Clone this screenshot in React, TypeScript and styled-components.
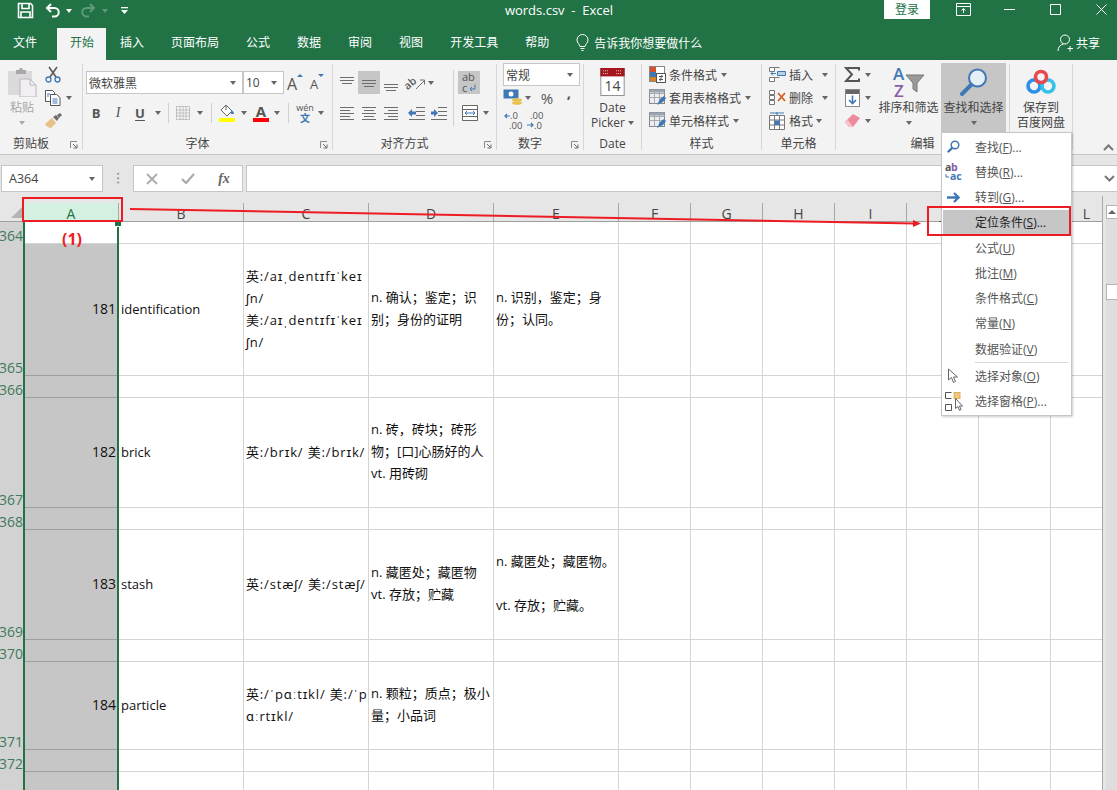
import { ReactNode } from "react"
import styled, { createGlobalStyle } from "styled-components"

const FONT = `"Open Sans", "Noto Sans CJK SC", sans-serif`
const GREEN = "#217346"
const RED = "#ed1c24"
const GRID_COLS = "24px 95px 125px 125px 125px 125px repeat(7, 72px)"

const GlobalStyle = createGlobalStyle`
  html, body {
    margin: 0;
    padding: 0;
    background: #e6e6e6;
  }
  body {
    font-family: ${FONT};
    font-size: 12px;
    color: #444;
  }
`

/* ---------- icons ---------- */

const G = "#6d6d6d"
const B = "#3f78b4"

function Save() {
  return (
    <svg width="17" height="17" viewBox="0 0 17 17" fill="none" stroke="#fff">
      <path d="M1.5 1.5h12l2 2v12h-14z" strokeWidth="1.6" />
      <path d="M5 2v4.5h7V2M4 15.5V10h9v5.500" strokeWidth="1.6" />
    </svg>
  )
}

function Undo() {
  return (
    <svg width="16" height="15" viewBox="0 0 16 15" fill="none" stroke="#fff" strokeWidth="2">
      <path d="M6 1 2 5l4 4" />
      <path d="M2 5h7.500a4 4 0 0 1 0 8.500H7" />
    </svg>
  )
}

function Redo() {
  return (
    <svg width="16" height="15" viewBox="0 0 16 15" fill="none" stroke="#5f9a7d" strokeWidth="2">
      <path d="m10 1 4 4-4 4" />
      <path d="M14 5H6.500a4 4 0 0 0 0 8.500H9" />
    </svg>
  )
}

function Customize() {
  return (
    <svg width="9" height="9" viewBox="0 0 9 9" fill="#fff">
      <rect x="1" y="1" width="7" height="1.300" />
      <path d="M1 4h7L4.500 8z" />
    </svg>
  )
}

function DisplayOptions() {
  return (
    <svg width="15" height="13" viewBox="0 0 15 13" fill="none" stroke="#fff">
      <path d="M.5.500h14v12H.500zM.5 3.500h14" />
      <path d="M7.500 10V5.500M5.500 7.500l2-2 2 2" />
    </svg>
  )
}

function WinMin() {
  return (
    <svg width="11" height="11" viewBox="0 0 11 11" stroke="#fff">
      <path d="M0 5.500h11" />
    </svg>
  )
}

function WinMax() {
  return (
    <svg width="11" height="11" viewBox="0 0 11 11" fill="none" stroke="#fff">
      <path d="M.5.500h10v10H.500z" />
    </svg>
  )
}

function WinClose() {
  return (
    <svg width="11" height="11" viewBox="0 0 11 11" stroke="#fff">
      <path d="m.500.500 10 10M10.500.500l-10 10" />
    </svg>
  )
}

function Bulb() {
  return (
    <svg width="13" height="18" viewBox="0 0 13 18" fill="none" stroke="#fff">
      <path d="M4 12.500C3.500 10 1 9 1 6a5.500 5.500 0 0 1 11 0c0 3-2.500 4-3 6.500z" />
      <path d="M4.500 14.500h4M5.500 16.500h2" />
    </svg>
  )
}

function Person() {
  return (
    <svg width="18" height="18" viewBox="0 0 18 18" fill="none" stroke="#fff">
      <circle cx="8" cy="5.500" r="4.500" />
      <path d="M1 17c0-4 2.500-6.500 5.500-7M13 12v5.500M10.500 14.500h5.500" />
    </svg>
  )
}

function Paste() {
  return (
    <svg width="30" height="30" viewBox="0 0 30 30">
      <path d="M1 4h24v24H1z" fill="#dcd9dc" />
      <path d="M9 3h3a2 2 0 0 1 4 0h3v4H9z" fill="#a9a7a9" />
      <path d="M13 12h10l6 6v12H13z" fill="#f1eff4" stroke="#b9b6bd" />
      <path d="M23 12v6h6" fill="none" stroke="#b9b6bd" />
    </svg>
  )
}

function Scissors() {
  return (
    <svg width="16" height="17" viewBox="0 0 16 17" fill="none">
      <path d="M4 1l7 10M12 1 5 11" stroke="#5b5b5b" strokeWidth="1.600" />
      <circle cx="3.500" cy="13.500" r="2.500" stroke={B} strokeWidth="1.300" />
      <circle cx="12.500" cy="13.500" r="2.500" stroke={B} strokeWidth="1.300" />
    </svg>
  )
}

function Copy() {
  return (
    <svg width="16" height="16" viewBox="0 0 16 16" fill="#fff" stroke="#555">
      <path d="M.5.500h7l2 2v9h-9z" />
      <path d="M5.500 4.500h6l3.500 3v8H5.500z" />
      <path d="M7.500 9h5M7.500 11h5M7.500 13h5M2 4h3M2 6h2" stroke={B} />
    </svg>
  )
}

function Painter() {
  return (
    <svg width="18" height="16" viewBox="0 0 18 16">
      <path d="M1 11 8 5l4 5-5 5c-2 0-5-2-6-4z" fill="#e9c087" />
      <path d="m9 4 3-2 3 3-2 3z" fill="#6d6d6d" />
      <path d="m13 2 3-2 2 2-3 3z" fill="#6d6d6d" />
    </svg>
  )
}

function Launcher() {
  return (
    <svg width="8" height="8" viewBox="0 0 8 8" fill="none" stroke="#8a8a8a">
      <path d="M.5 7V.500H7" />
      <path d="M3 3l3.500 3.500M7 3.500V7H3.500" stroke="#6a6a6a" />
    </svg>
  )
}

function Borders() {
  return (
    <svg width="14" height="14" viewBox="0 0 14 14" fill="none" stroke="#9a9a9a" strokeDasharray="1 1">
      <path d="M.5.500h13v13H.500zM.5 7h13M7 .500v13M.5 4h13M.5 10h13M4 .500v13M10 .500v13" />
    </svg>
  )
}

function FillColor() {
  return (
    <svg width="18" height="18" viewBox="0 0 18 18">
      <path d="m8 1 6 6-5 5-6-6z" fill="#fff" stroke="#666" />
      <path d="M8 1V6" stroke="#666" />
      <path d="M13 6c2 1 3 2 3 4h-3z" fill={B} />
      <rect x="1" y="14" width="16" height="4" fill="#ffff00" />
    </svg>
  )
}

function FontColor() {
  return (
    <svg width="18" height="18" viewBox="0 0 18 18" overflow="visible">
      <text x="9" y="12.500" textAnchor="middle" fontSize="15" fontWeight="700" fontFamily="Open Sans" fill="#555">A</text>
      <rect x="1" y="14" width="16" height="4" fill="#ff0000" />
    </svg>
  )
}

function AlignLines({ rows, color = G }: { rows: [number, number, number][]; color?: string }) {
  return (
    <svg width="16" height="16" viewBox="0 0 16 16" stroke={color}>
      {rows.map(([x1, x2, y]) => (
        <path key={`${x1}-${x2}-${y}`} d={`M${x1} ${y}.5H${x2}`} />
      ))}
    </svg>
  )
}

function Orientation() {
  return (
    <svg width="19" height="17" viewBox="0 0 19 17" overflow="visible">
      <text x="0" y="15" transform="rotate(-40 2 15)" fontSize="10.500" fontFamily="Open Sans" fontWeight="600" fill="#555">ab</text>
      <path d="M9 15 17 7M13 6h4.500v4.500" fill="none" stroke={G} />
    </svg>
  )
}

function WrapText() {
  return (
    <svg width="17" height="22" viewBox="0 0 17 22" overflow="visible">
      <text x="1" y="9" fontSize="11" fontFamily="Open Sans" fill="#555">ab</text>
      <text x="1" y="20" fontSize="11" fontFamily="Open Sans" fill="#555">c</text>
      <path d="M14 12.500V17H9M11 15l-2 2 2 2" fill="none" stroke={B} />
    </svg>
  )
}

function Indent({ flip }: { flip?: boolean }) {
  return (
    <svg width="17" height="15" viewBox="0 0 17 15" stroke={G}>
      <path d="M8 1.500h9M8 5.500h9M8 9.500h9M1 13.500h16" />
      <path
        d={flip ? "M1 5.500h3V3l4 4-4 4V8.500H1z" : "M8 5.500H4V3L0 7l4 4V8.500h4z"}
        fill={B}
        stroke="none"
      />
    </svg>
  )
}

function Merge() {
  return (
    <svg width="16" height="16" viewBox="0 0 16 16" fill="#fff" stroke="#666">
      <path d="M.5.500h15v15H.500zM.5 4.500h15M.5 11.500h15" />
      <path d="M3 8h10M5 6 3 8l2 2M11 6l2 2-2 2" fill="none" stroke={B} />
    </svg>
  )
}

function Currency() {
  return (
    <svg width="20" height="17" viewBox="0 0 20 17">
      <rect x=".5" y=".5" width="15" height="9" fill={B} />
      <circle cx="8" cy="5" r="2.500" fill="#fff" />
      <ellipse cx="14" cy="11" rx="5" ry="1.800" fill="#e9c050" />
      <ellipse cx="14" cy="14" rx="5" ry="1.800" fill="#e9c050" />
    </svg>
  )
}

function DecimalMore({ less }: { less?: boolean }) {
  return (
    <svg width="19" height="20" viewBox="0 0 19 20" fontFamily="Open Sans" fontSize="9.500" fill="#555" overflow="visible">
      <text x={less ? 4 : 6} y="8">{less ? ".00" : ".0"}</text>
      <text x={less ? 8 : 5} y="18">{less ? ".0" : ".00"}</text>
      <path
        d={less ? "M1 14h6M5 12l2 2-2 2" : "M6 5H1M3 3 1 5l2 2"}
        fill="none"
        stroke={B}
        strokeWidth="1.200"
      />
    </svg>
  )
}

function Calendar() {
  return (
    <svg width="25" height="28" viewBox="0 0 26 30">
      <rect x=".5" y=".5" width="25" height="29" fill="#fff" stroke="#8b8b8b" />
      <rect width="26" height="9" fill="#a4161c" />
      <path d="M3 3h6M17 3h5" stroke="#eee" strokeDasharray="1 1" />
      <path d="M3 6h6M17 6h5" stroke="#eee" strokeDasharray="1 1" />
      <text x="13" y="25" textAnchor="middle" fontSize="15" fontFamily="Open Sans" fill="#444">14</text>
    </svg>
  )
}

function CondFormat() {
  return (
    <svg width="17" height="17" viewBox="0 0 17 17">
      <rect x=".5" y=".5" width="15" height="15" fill="#fff" stroke="#888" />
      <rect x="1" y="1" width="6" height="5" fill="#d3522a" />
      <rect x="1" y="6" width="6" height="5" fill="#3f78b4" />
      <rect x="1" y="11" width="6" height="4" fill="#d3822a" />
      <rect x="7.500" y="7.500" width="9" height="9" fill="#fff" stroke="#555" />
      <path d="M10 10.500h4M10 13.500h4M13 9l-2 6" stroke="#555" fill="none" />
    </svg>
  )
}

function TableStyle() {
  return (
    <svg width="17" height="17" viewBox="0 0 17 17">
      <rect x=".5" y=".5" width="15" height="14" fill="#e9eef5" stroke="#888" />
      <path d="M.5 4.500h15M.5 8.500h15M5.500.500v14M10.500.500v14" stroke="#aaa" />
      <path d="M.5.500h15v3H.500z" fill="#9aa5b5" />
      <path d="m8 16 3-6 4-3 2 2-3 4z" fill={B} />
    </svg>
  )
}

function CellInsert() {
  return (
    <svg width="17" height="17" viewBox="0 0 17 17" fill="#fff" stroke="#777">
      <path d="M.5 1.500h5v4h-5zM.5 11.500h5v4h-5zM5.500 1.500h5M5.500 11.500h5" />
      <path d="M8.500 5.500h8v4h-8z" fill="#bcd0e5" stroke={B} />
      <path d="M7 7.500H2M4 5.500l-2 2 2 2" fill="none" stroke={B} />
    </svg>
  )
}

function CellDelete() {
  return (
    <svg width="17" height="17" viewBox="0 0 17 17" fill="#fff" stroke="#777">
      <path d="M.5 1.500h5v4h-5zM.5 11.500h5v4h-5zM.5 6.500h5v4h-5z" />
      <path d="m9 4 7 8M16 4l-7 8" fill="none" stroke="#d3622a" strokeWidth="1.800" />
    </svg>
  )
}

function CellFormat() {
  return (
    <svg width="17" height="18" viewBox="0 0 17 18" fill="#fff" stroke="#777">
      <path d="M.5 3.500h15v14H.500zM.5 8h15M.5 13h15M5.500 3.500v14M10.500 3.500v14" />
      <rect x="6" y="8.500" width="5" height="4.500" fill={B} stroke="none" />
      <path d="M1 1h14M8 0v3" stroke={B} fill="none" />
    </svg>
  )
}

function Sigma() {
  return (
    <svg width="16" height="15" viewBox="0 0 16 15" fill="none" stroke="#555" strokeWidth="2">
      <path d="M15 3.500V1H2l6 6.500L2 14h13v-2.500" />
    </svg>
  )
}

function FillDown() {
  return (
    <svg width="15" height="18" viewBox="0 0 15 18">
      <rect x=".5" y=".5" width="14" height="17" fill="#fff" stroke="#888" />
      <rect x="1" y="1" width="13" height="4" fill="#666" />
      <path d="M7.500 6.500v8M4 11l3.500 3.500L11 11" fill="none" stroke={B} strokeWidth="1.600" />
    </svg>
  )
}

function Eraser() {
  return (
    <svg width="15" height="13" viewBox="0 0 15 13">
      <path d="M0 8 8 0l7 4-7 9H4z" fill="#ee8a9b" />
      <path d="M0 8l4 5h4L3 6z" fill="#f6c3cc" />
    </svg>
  )
}

function SortFilter() {
  return (
    <svg width="32" height="32" viewBox="0 0 32 32" fontFamily="Open Sans" fontWeight="600" fontSize="17" overflow="visible">
      <text x="0" y="14" fill="#3f78b4">A</text>
      <text x="1" y="31" fill="#8a5aa8">Z</text>
      <path d="M13 9h18l-7 8v9l-4-3v-6z" fill="#9a9a9a" stroke="#777" />
    </svg>
  )
}

function BigLens() {
  return (
    <svg width="28" height="28" viewBox="0 0 28 28" fill="none">
      <circle cx="17.500" cy="10" r="8.500" fill="#e6eef6" stroke="#3f78b4" strokeWidth="2" />
      <path d="m11 17-9 9" stroke="#3f78b4" strokeWidth="4" strokeLinecap="round" />
    </svg>
  )
}

function BaiduLogo() {
  return (
    <svg width="30" height="26" viewBox="0 0 30 26" fill="none" strokeWidth="3.600">
      <circle cx="8" cy="17" r="6" stroke="#2d8fe8" />
      <circle cx="22" cy="17" r="6" stroke="#33c2e8" />
      <circle cx="15" cy="8" r="5.500" stroke="#e8484f" />
    </svg>
  )
}

function SmallLens() {
  return (
    <svg width="13" height="13" viewBox="0 0 13 13" fill="none">
      <circle cx="8" cy="5" r="3.800" fill="#fff" stroke="#3f78b4" strokeWidth="1.500" />
      <path d="M5 8 1.500 11.500" stroke="#3f78b4" strokeWidth="2.400" strokeLinecap="round" />
    </svg>
  )
}

function ReplaceIcon() {
  return (
    <svg width="17" height="18" viewBox="0 0 17 18" fontFamily="Open Sans" fontWeight="700" fontSize="10.500" overflow="visible">
      <text x="0" y="8" fill="#555">a</text>
      <text x="6" y="8" fill="#8a5aa8">b</text>
      <text x="5" y="17" fill="#3f78b4">ac</text>
      <path d="M1 11v3h3" fill="none" stroke="#3f78b4" />
    </svg>
  )
}

function GotoIcon() {
  return (
    <svg width="13" height="11" viewBox="0 0 13 11" fill="none" stroke="#3f78b4" strokeWidth="2.400">
      <path d="M0 5.500h10M7 1l4.500 4.500L7 10" />
    </svg>
  )
}

function PointerIcon() {
  return (
    <svg width="13" height="16" viewBox="0 0 13 16" fill="#fff" stroke="#666">
      <path d="M1.500 1v11l3-2.500 2 5 2-1-2-4.500h4z" />
    </svg>
  )
}

function PaneIcon() {
  return (
    <svg width="18" height="19" viewBox="0 0 18 19" fill="none" stroke="#555">
      <path d="M.5.500h6M.5.500v6h6" />
      <path d="M.5 12.500h6v6h-6z" />
      <rect x="9" y=".5" width="6" height="6" fill="#f0c77a" stroke="#e0b060" />
      <path d="M10.500 6.500v10l2.500-2 1.500 4 1.500-1-1.500-3.500h3z" fill="#fff" stroke="#666" />
    </svg>
  )
}

function Chevron({ up }: { up?: boolean }) {
  return (
    <svg width="11" height="7" viewBox="0 0 11 7" fill="none" stroke="#777" strokeWidth="2">
      <path d={up ? "m1 6 4.500-4.500L10 6" : "m1 1 4.500 4.500L10 1"} />
    </svg>
  )
}

function CancelMark() {
  return (
    <svg width="12" height="12" viewBox="0 0 12 12" stroke="#aaa" strokeWidth="1.800">
      <path d="m1 1 10 10M11 1 1 11" />
    </svg>
  )
}

function CheckMark() {
  return (
    <svg width="14" height="11" viewBox="0 0 14 11" fill="none" stroke="#aaa" strokeWidth="2.200">
      <path d="m1 6 4 4 8-9" />
    </svg>
  )
}

function ArrowLine() {
  return (
    <svg width="800" height="20" viewBox="0 0 800 20">
      <path d="M0 1 785 15.500" stroke={RED} strokeWidth="2" />
      <path d="m783 12 8 3.500-8 3.500z" fill={RED} />
    </svg>
  )
}

/* ---------- window chrome ---------- */

const App_ = styled.div`
  position: relative;
  width: 1117px;
  height: 790px;
  overflow: hidden;
  display: flex;
  flex-direction: column;
`

const TitleBar = styled.header`
  height: 28px;
  background: ${GREEN};
  color: #fff;
  display: grid;
  grid-template-columns: 1fr auto 1fr;
  align-items: start;
`

const Quick = styled.div`
  display: flex;
  align-items: center;
  height: 21px;
  padding-left: 17px;
`

const QuickItem = styled.span<{ $w: number }>`
  width: ${(p) => p.$w}px;
  display: flex;
  justify-content: center;
  align-items: center;
`

const QuickCaret = styled.i<{ $dim?: boolean }>`
  display: block;
  width: 0;
  height: 0;
  border-left: 3.500px solid transparent;
  border-right: 3.500px solid transparent;
  border-top: 4px solid ${(p) => (p.$dim ? "#5f9a7d" : "#fff")};
`

const Title = styled.div`
  font-size: 13px;
  line-height: 21px;
  white-space: pre;
  padding-left: 1px;
`

const WinControls = styled.div`
  display: flex;
  justify-content: flex-end;
  align-items: flex-start;
  margin-right: -7px;
`

const SignIn = styled.button`
  width: 46px;
  height: 19px;
  border: 0;
  padding: 0;
  background: #fff;
  color: ${GREEN};
  font: 12px/19px ${FONT};
  margin-right: 10px;
  flex: none;
`

const WinButton = styled.span`
  width: 46px;
  height: 18px;
  flex: none;
  display: flex;
  justify-content: center;
  align-items: center;
`

const TabBar = styled.nav`
  height: 32px;
  background: ${GREEN};
  display: flex;
  gap: 1px;
  align-items: stretch;
  color: #fff;
  font-size: 12px;
`

const Tab = styled.span<{ $active?: boolean; $first?: boolean }>`
  padding: 0 ${(p) => (p.$active ? 12 : 13)}px 0 13px;
  line-height: 30px;
  margin-right: ${(p) => (p.$first ? 6 : 0)}px;
  background: ${(p) => (p.$active ? "#f3f3f3" : "transparent")};
  color: ${(p) => (p.$active ? GREEN : "#fff")};
`

const TellMe = styled.span`
  display: flex;
  align-items: center;
  gap: 5px;
  margin-left: 13px;
  height: 30px;
`

const Share = styled.span`
  margin-left: auto;
  margin-right: 17px;
  display: flex;
  align-items: center;
  gap: 1px;
  height: 30px;
`

/* ---------- ribbon ---------- */

const Ribbon = styled.section`
  height: 95px;
  box-sizing: border-box;
  flex: none;
  background: #f3f3f3;
  border-bottom: 1px solid #c6c6c6;
  display: flex;
  align-items: flex-start;
  padding-top: 4px;
  font-size: 12px;
  color: #444;
`

const GroupBox = styled.div<{ $w: number }>`
  width: ${(p) => p.$w}px;
  height: 86px;
  box-sizing: border-box;
  border-right: 1px solid #d6d6d6;
  flex: none;
  display: flex;
  flex-direction: column;
`

const GroupBody = styled.div<{ $pad?: number }>`
  height: 70px;
  flex: none;
  display: flex;
  padding-left: ${(p) => p.$pad ?? 0}px;
`

const GroupFoot = styled.div`
  height: 16px;
  display: flex;
  align-items: center;
`

const GroupLabel = styled.span`
  flex: 1;
  text-align: center;
  line-height: 16px;
  padding-top: 3px;
`

const LauncherSlot = styled.span`
  width: 20px;
  display: flex;
  justify-content: flex-end;
  padding: 5px 4px 0 0;
  box-sizing: border-box;
`

function Group({ w, pad, label, launcher, children }: {
  w: number
  pad?: number
  label?: string
  launcher?: boolean
  children: ReactNode
}) {
  return (
    <GroupBox $w={w}>
      <GroupBody $pad={pad}>{children}</GroupBody>
      <GroupFoot>
        <GroupLabel>{label}</GroupLabel>
        {launcher && (
          <LauncherSlot>
            <Launcher />
          </LauncherSlot>
        )}
      </GroupFoot>
    </GroupBox>
  )
}

const Stack = styled.div<{ $top?: number; $gap?: number; $w?: number; $ml?: number }>`
  display: flex;
  flex-direction: column;
  margin-top: ${(p) => p.$top ?? -1}px;
  margin-left: ${(p) => p.$ml ?? 0}px;
  gap: ${(p) => p.$gap ?? 0}px;
  width: ${(p) => (p.$w ? `${p.$w}px` : "auto")};
  flex: none;
`

const ToolRow = styled.div<{ $h?: number }>`
  display: flex;
  align-items: center;
  height: ${(p) => p.$h ?? 23}px;
  white-space: nowrap;
`

const Tool = styled.span<{ $w?: number; $ml?: number; $on?: boolean }>`
  width: ${(p) => p.$w ?? 22}px;
  height: 100%;
  margin-left: ${(p) => p.$ml ?? 0}px;
  flex: none;
  display: flex;
  justify-content: center;
  align-items: center;
  background: ${(p) => (p.$on ? "#c6c6c6" : "transparent")};
`

const CaretShape = styled.i<{ $dim?: boolean }>`
  display: block;
  width: 0;
  height: 0;
  border-left: 3.500px solid transparent;
  border-right: 3.500px solid transparent;
  border-top: 4px solid ${(p) => (p.$dim ? "#aaa" : "#666")};
`

function Caret({ w = 8, ml, dim }: { w?: number; ml?: number; dim?: boolean }) {
  return (
    <Tool $w={w} $ml={ml}>
      <CaretShape $dim={dim} />
    </Tool>
  )
}

const RowSep = styled.span<{ $l: number; $r: number }>`
  width: 1px;
  height: 20px;
  background: #d0d0d0;
  margin: 0 ${(p) => p.$r}px 0 ${(p) => p.$l}px;
  flex: none;
`

const ColumnSep = styled.span`
  width: 1px;
  height: 56px;
  margin: 6px 4px 0;
  background: #d0d0d0;
  flex: none;
`

const SelectBox = styled.div<{ $w: number; $ml?: number }>`
  width: ${(p) => p.$w}px;
  height: 23px;
  margin-left: ${(p) => p.$ml ?? 0}px;
  box-sizing: border-box;
  border: 1px solid #c6c6c6;
  background: #fff;
  display: flex;
  align-items: center;
  justify-content: space-between;
  padding: 0 6px 0 2px;
  flex: none;
  color: #444;
`

const GrowFont = styled.span<{ $size: number }>`
  font-size: ${(p) => p.$size}px;
  color: #555;
  line-height: 1;
  padding-top: 3px;
`

const SizeMark = styled.i<{ $down?: boolean }>`
  display: block;
  align-self: flex-start;
  margin-top: 3px;
  width: 0;
  height: 0;
  border-left: 3px solid transparent;
  border-right: 3px solid transparent;
  border-${(p) => (p.$down ? "top" : "bottom")}: 3px solid ${B};
`

const ItalicFace = styled.span`
  font: italic 400 14px "Liberation Serif", serif;
  color: #555;
`

const BoldFace = styled.span`
  font: 700 13px ${FONT};
  color: #555;
`

const UnderFace = styled(BoldFace)`
  text-decoration: underline;
  text-underline-offset: 2px;
`

const Pinyin = styled.span`
  display: flex;
  flex-direction: column;
  align-items: center;
  font-size: 9px;
  line-height: 10px;
  color: #555;
`

const PinyinHan = styled.span`
  color: ${B};
  font-weight: 700;
  font-size: 10px;
`

const Percent = styled.span`
  font-size: 15px;
  color: #555;
`

const Comma = styled.span`
  font: 700 15px/12px ${FONT};
  color: #555;
  margin-top: -12px;
`

const ToolLabel = styled.span`
  margin-left: 3px;
`

const BigButton = styled.div<{ $w: number; $on?: boolean; $disabled?: boolean }>`
  width: ${(p) => p.$w}px;
  height: 69px;
  margin-top: -1px;
  flex: none;
  display: flex;
  flex-direction: column;
  align-items: center;
  background: ${(p) => (p.$on ? "#c6c6c6" : "transparent")};
  color: ${(p) => (p.$disabled ? "#a6a6a6" : "#444")};
  line-height: 15px;
  white-space: nowrap;
`

const BigIcon = styled.div`
  height: 37px;
  display: flex;
  align-items: center;
  justify-content: center;
  flex: none;
`

const BigText = styled.span`
  display: flex;
  align-items: center;
  height: 15px;
  gap: 3px;
  flex: none;
`

const CollapseSlot = styled.div`
  margin-left: auto;
  align-self: flex-end;
  padding: 0 3px 3px 0;
  display: flex;
`

/* ---------- formula bar ---------- */

const FormulaBar = styled.div`
  height: 41px;
  flex: none;
  box-sizing: border-box;
  padding: 10px 0 0 1px;
  background: #e6e6e6;
  display: flex;
  align-items: flex-start;
`

const NameBox = styled.div`
  width: 102px;
  height: 27px;
  box-sizing: border-box;
  background: #fff;
  border: 1px solid #c6c6c6;
  display: flex;
  align-items: center;
  justify-content: space-between;
  padding: 0 7px;
  font-size: 12.500px;
  color: #444;
  flex: none;
`

const Grip = styled.span`
  width: 30px;
  height: 27px;
  flex: none;
  display: flex;
  justify-content: center;
  align-items: center;
  color: #999;
  font-size: 12px;
  font-weight: 700;
  writing-mode: vertical-rl;
  letter-spacing: 1px;
`

const FormulaButtons = styled.div`
  width: 110px;
  height: 27px;
  box-sizing: border-box;
  background: #fff;
  border: 1px solid #c6c6c6;
  display: grid;
  grid-template-columns: 36px 36px 36px;
  justify-items: center;
  align-items: center;
  flex: none;
`

const FxText = styled.span`
  font: italic 700 14px "Liberation Serif", serif;
  color: #666;
`

const FormulaInput = styled.div`
  flex: 1;
  height: 27px;
  margin-left: 3px;
  box-sizing: border-box;
  background: #fff;
  border: 1px solid #c6c6c6;
  border-right: 0;
  display: flex;
  align-items: center;
  justify-content: flex-end;
  padding-right: 2px;
`

/* ---------- sheet ---------- */

const Sheet = styled.div`
  flex: 1;
  min-height: 0;
  display: flex;
  background: #e6e6e6;
  overflow: hidden;
`

const GridArea = styled.div`
  width: 1103px;
  flex: none;
  overflow: hidden;
  box-sizing: border-box;
  border-right: 1px solid #a8a8a8;
  background: #fff;
`

const HeaderRow = styled.div`
  display: grid;
  grid-template-columns: ${GRID_COLS};
  height: 26px;
  box-sizing: border-box;
  background: #e6e6e6;
  border-bottom: 1px solid #9f9f9f;
`

const Corner = styled.div`
  display: flex;
  justify-content: flex-end;
  align-items: flex-end;
  padding: 0 2px 3px 0;
`

const CornerMark = styled.i`
  display: block;
  width: 0;
  height: 0;
  border-left: 11px solid transparent;
  border-bottom: 11px solid #b4b4b4;
`

const ColHead = styled.div<{ $selected?: boolean }>`
  margin-top: 7px;
  box-sizing: border-box;
  font-size: 14px;
  line-height: 22px;
  height: 18px;
  text-align: center;
  border-right: 1px solid #a8a8a8;
  background: ${(p) => (p.$selected ? "#d3f0e0" : "transparent")};
  color: ${(p) => (p.$selected ? GREEN : "#444")};
`

const Row = styled.div<{ $h: number }>`
  display: grid;
  grid-template-columns: ${GRID_COLS};
  height: ${(p) => p.$h}px;
`

const RowHead = styled.div`
  background: #d2d2d2;
  color: #3f7a5b;
  font-size: 14px;
  line-height: 16px;
  display: flex;
  justify-content: flex-end;
  align-items: flex-end;
  overflow: hidden;
  padding-right: 1px;
`

const Cell = styled.div<{ $numeric?: boolean; $selected?: boolean; $active?: boolean; $ipa?: boolean; $lift?: number }>`
  box-sizing: border-box;
  border-right: 1px solid #d4d4d4;
  border-bottom: 1px solid ${(p) => (p.$selected && !p.$active ? "#9f9f9f" : "#d4d4d4")};
  background: ${(p) => (p.$selected && !p.$active ? "#c6c6c6" : "#fff")};
  display: flex;
  flex-direction: column;
  justify-content: center;
  align-items: ${(p) => (p.$numeric ? "flex-end" : "flex-start")};
  padding: 0 2px ${(p) => p.$lift ?? 3}px;
  font-size: ${(p) => (p.$numeric ? 14 : 13)}px;
  letter-spacing: ${(p) => (p.$ipa ? 0.85 : 0)}px;
  line-height: 22px;
  color: #111;
  white-space: pre;
  overflow: hidden;
`

const ScrollColumn = styled.div`
  flex: 1;
  padding: 9px 0 0 3px;
  display: flex;
`

const ScrollTrack = styled.div`
  flex: 1;
  background: #dedede;
  display: flex;
  flex-direction: column;
`

const ScrollButton = styled.div`
  height: 14px;
  box-sizing: border-box;
  background: #fff;
  border: 1px solid #b5b5b5;
  border-right: 0;
  display: flex;
  justify-content: center;
  align-items: center;
`

const ScrollUp = styled.i`
  display: block;
  width: 0;
  height: 0;
  border-left: 4px solid transparent;
  border-right: 4px solid transparent;
  border-bottom: 4px solid #666;
`

const ScrollThumb = styled.div`
  height: 16px;
  margin-top: 65px;
  box-sizing: border-box;
  background: #fff;
  border: 1px solid #b5b5b5;
  border-right: 0;
`

/* ---------- things lying over the sheet ---------- */

const SelectionFrame = styled.div`
  position: absolute;
  left: 23px;
  top: 221px;
  width: 96px;
  bottom: 0;
  box-sizing: border-box;
  border-left: 2px solid ${GREEN};
  border-right: 2px solid ${GREEN};
`

const FillHandle = styled.i`
  position: absolute;
  left: 115px;
  top: 221px;
  width: 6px;
  height: 5px;
  background: ${GREEN};
  border-bottom: 1px solid #fff;
`

const RedBox = styled.div<{ $l: number; $t: number; $w: number; $h: number }>`
  position: absolute;
  left: ${(p) => p.$l}px;
  top: ${(p) => p.$t}px;
  width: ${(p) => p.$w}px;
  height: ${(p) => p.$h}px;
  box-sizing: border-box;
  border: 2px solid ${RED};
`

const StepNote = styled.span`
  position: absolute;
  left: 62px;
  top: 229px;
  font: 700 16px/20px ${FONT};
  color: ${RED};
`

const ArrowSlot = styled.div`
  position: absolute;
  left: 130px;
  top: 208px;
  display: flex;
`

const Menu = styled.div`
  position: absolute;
  left: 941px;
  top: 132px;
  width: 131px;
  box-sizing: border-box;
  padding: 1px;
  background: #fff;
  border: 1px solid #c6c6c6;
  box-shadow: 1px 1px 2px rgba(0, 0, 0, 0.2);
  display: flex;
  flex-direction: column;
  font-size: 12px;
  color: #555;
`

const MenuItem = styled.div<{ $on?: boolean }>`
  height: 25.250px;
  flex: none;
  display: flex;
  align-items: center;
  background: ${(p) => (p.$on ? "#c6c6c6" : "transparent")};
  color: ${(p) => (p.$on ? "#222" : "#555")};
  white-space: nowrap;
`

const MenuIcon = styled.span`
  width: 21px;
  margin-right: 11px;
  display: flex;
  justify-content: center;
  align-items: center;
  flex: none;
`

const MenuDivider = styled.div`
  height: 1px;
  margin: 1px 2px 0 32px;
  background: #d6d6d6;
  flex: none;
`

/* ---------- data ---------- */

const columns = ["A", "B", "C", "D", "E", "F", "G", "H", "I", "J", "K", "L"]

interface SheetRow {
  n: number | string
  h: number
  a?: string
  b?: string
  c?: string[]
  d?: string[]
  e?: string[]
}

const rows: SheetRow[] = [
  { n: 364, h: 22 },
  {
    n: 365,
    h: 132,
    a: "181",
    b: "identification",
    c: ["英:/aɪˌdentɪfɪˈkeɪ", "ʃn/", "美:/aɪˌdentɪfɪˈkeɪ", "ʃn/"],
    d: ["n. 确认；鉴定；识", "别；身份的证明"],
    e: ["n. 识别，鉴定；身", "份；认同。"],
  },
  { n: 366, h: 22 },
  {
    n: 367,
    h: 110,
    a: "182",
    b: "brick",
    c: ["英:/brɪk/ 美:/brɪk/"],
    d: ["n. 砖，砖块；砖形", "物；[口]心肠好的人", "vt. 用砖砌"],
  },
  { n: 368, h: 22 },
  {
    n: 369,
    h: 110,
    a: "183",
    b: "stash",
    c: ["英:/stæʃ/ 美:/stæʃ/"],
    d: ["n. 藏匿处；藏匿物", "vt. 存放；贮藏"],
    e: ["n. 藏匿处；藏匿物。", " ", "vt. 存放；贮藏。"],
  },
  { n: 370, h: 22 },
  {
    n: 371,
    h: 88,
    a: "184",
    b: "particle",
    c: ["英:/ˈpɑːtɪkl/ 美:/ˈp", "ɑːrtɪkl/"],
    d: ["n. 颗粒；质点；极小", "量；小品词"],
  },
  { n: 372, h: 22 },
  { n: "", h: 44 },
]

function Lines({ text }: { text?: string[] }) {
  return (
    <>
      {text?.map((line, i) => (
        <span key={i}>{line}</span>
      ))}
    </>
  )
}

const menuItems: { text: string; key: string; tail?: string; icon?: ReactNode; on?: boolean }[] = [
  { text: "查找", key: "F", tail: "...", icon: <SmallLens /> },
  { text: "替换", key: "R", tail: "...", icon: <ReplaceIcon /> },
  { text: "转到", key: "G", tail: "...", icon: <GotoIcon /> },
  { text: "定位条件", key: "S", tail: "...", on: true },
  { text: "公式", key: "U" },
  { text: "批注", key: "M" },
  { text: "条件格式", key: "C" },
  { text: "常量", key: "N" },
  { text: "数据验证", key: "V" },
]

function MenuEntry({ text, accel, tail, icon, on }: {
  text: string
  accel: string
  tail?: string
  icon?: ReactNode
  on?: boolean
}) {
  return (
    <MenuItem $on={on}>
      <MenuIcon>{icon}</MenuIcon>
      <span>
        {text}(<u>{accel}</u>){tail}
      </span>
    </MenuItem>
  )
}

const topAlign: [number, number, number][] = [[1, 15, 2], [1, 15, 5], [3, 13, 8]]
const midAlign: [number, number, number][] = [[1, 15, 5], [1, 15, 8], [3, 13, 11]]
const botAlign: [number, number, number][] = [[1, 15, 9], [1, 15, 12], [3, 13, 15]]
const leftAlign: [number, number, number][] = [[1, 15, 2], [1, 11, 5], [1, 15, 8], [1, 11, 11], [1, 15, 14]]
const centerAlign: [number, number, number][] = [[1, 15, 2], [3, 13, 5], [1, 15, 8], [3, 13, 11], [1, 15, 14]]
const rightAlign: [number, number, number][] = [[1, 15, 2], [5, 15, 5], [1, 15, 8], [5, 15, 11], [1, 15, 14]]

export default function App() {
  return (
    <App_>
      <GlobalStyle />
      <TitleBar>
        <Quick>
          <QuickItem $w={17}><Save /></QuickItem>
          <QuickItem $w={11} />
          <QuickItem $w={16}><Undo /></QuickItem>
          <QuickItem $w={16}><QuickCaret /></QuickItem>
          <QuickItem $w={2} />
          <QuickItem $w={18}><Redo /></QuickItem>
          <QuickItem $w={16}><QuickCaret $dim /></QuickItem>
          <QuickItem $w={22}><Customize /></QuickItem>
        </Quick>
        <Title>words.csv  -  Excel</Title>
        <WinControls>
          <SignIn>登录</SignIn>
          <WinButton><DisplayOptions /></WinButton>
          <WinButton><WinMin /></WinButton>
          <WinButton><WinMax /></WinButton>
          <WinButton><WinClose /></WinButton>
        </WinControls>
      </TitleBar>

      <TabBar>
        <Tab $first>文件</Tab>
        <Tab $active>开始</Tab>
        <Tab>插入</Tab>
        <Tab>页面布局</Tab>
        <Tab>公式</Tab>
        <Tab>数据</Tab>
        <Tab>审阅</Tab>
        <Tab>视图</Tab>
        <Tab>开发工具</Tab>
        <Tab>帮助</Tab>
        <TellMe>
          <Bulb />
          告诉我你想要做什么
        </TellMe>
        <Share>
          <Person />
          共享
        </Share>
      </TabBar>

      <Ribbon>
        <Group w={83} pad={9} label="剪贴板" launcher>
          <BigButton $w={26} $disabled>
            <BigIcon><Paste /></BigIcon>
            <BigText>粘贴</BigText>
            <BigText><CaretShape $dim /></BigText>
          </BigButton>
          <Stack $w={36} $ml={7}>
            <ToolRow><Tool $w={22}><Scissors /></Tool></ToolRow>
            <ToolRow><Tool $w={22}><Copy /></Tool><Caret w={10} /></ToolRow>
            <ToolRow><Tool $w={22}><Painter /></Tool></ToolRow>
          </Stack>
        </Group>

        <Group w={250} pad={2} label="字体" launcher>
          <Stack $top={7} $gap={8}>
            <ToolRow>
              <SelectBox $w={157} $ml={1}>
                微软雅黑
                <CaretShape />
              </SelectBox>
              <SelectBox $w={41}>
                10
                <CaretShape />
              </SelectBox>
              <Tool $w={22}><GrowFont $size={16}>A</GrowFont><SizeMark /></Tool>
              <Tool $w={22}><GrowFont $size={13}>A</GrowFont><SizeMark $down /></Tool>
            </ToolRow>
            <ToolRow $h={22}>
              <Tool><BoldFace>B</BoldFace></Tool>
              <Tool><ItalicFace>I</ItalicFace></Tool>
              <Tool><UnderFace>U</UnderFace></Tool>
              <Caret w={12} ml={1} />
              <RowSep $l={4} $r={5} />
              <Tool $w={18}><Borders /></Tool>
              <Caret w={16} />
              <RowSep $l={3} $r={3} />
              <Tool $w={24}><FillColor /></Tool>
              <Caret w={10} />
              <Tool $w={24}><FontColor /></Tool>
              <Caret w={8} />
              <RowSep $l={7} $r={4} />
              <Tool $w={24}>
                <Pinyin>
                  wén
                  <PinyinHan>文</PinyinHan>
                </Pinyin>
              </Tool>
              <Caret w={8} />
            </ToolRow>
          </Stack>
        </Group>

        <Group w={164} pad={3} label="对齐方式" launcher>
          <Stack $top={7} $gap={8} $w={113}>
            <ToolRow>
              <Tool><AlignLines rows={topAlign} /></Tool>
              <Tool $on><AlignLines rows={midAlign} /></Tool>
              <Tool><AlignLines rows={botAlign} /></Tool>
              <Tool $ml={3}><Orientation /></Tool>
              <Caret w={8} />
            </ToolRow>
            <ToolRow $h={22}>
              <Tool><AlignLines rows={leftAlign} /></Tool>
              <Tool><AlignLines rows={centerAlign} /></Tool>
              <Tool><AlignLines rows={rightAlign} /></Tool>
              <Tool $ml={3}><Indent /></Tool>
              <Tool><Indent flip /></Tool>
            </ToolRow>
          </Stack>
          <ColumnSep />
          <Stack $top={7} $gap={8}>
            <ToolRow><Tool $on><WrapText /></Tool></ToolRow>
            <ToolRow $h={22}><Tool $w={24}><Merge /></Tool><Caret w={8} /></ToolRow>
          </Stack>
        </Group>

        <Group w={87} pad={6} label="数字" launcher>
          <Stack>
            <ToolRow>
              <SelectBox $w={77}>
                常规
                <CaretShape />
              </SelectBox>
            </ToolRow>
            <ToolRow>
              <Tool $w={20}><Currency /></Tool>
              <Caret w={10} />
              <Tool $w={20} $ml={4}><Percent>%</Percent></Tool>
              <Tool $w={20} $ml={2}><Comma>,</Comma></Tool>
            </ToolRow>
            <ToolRow>
              <Tool $w={20}><DecimalMore /></Tool>
              <Tool $w={22} $ml={1}><DecimalMore less /></Tool>
            </ToolRow>
          </Stack>
        </Group>

        <Group w={58} label="Date">
          <BigButton $w={57}>
            <BigIcon><Calendar /></BigIcon>
            <BigText>Date</BigText>
            <BigText>Picker <CaretShape /></BigText>
          </BigButton>
        </Group>

        <Group w={120} pad={6} label="样式">
          <Stack>
            <ToolRow><Tool $w={18}><CondFormat /></Tool><ToolLabel>条件格式</ToolLabel><Caret w={14} /></ToolRow>
            <ToolRow><Tool $w={18}><TableStyle /></Tool><ToolLabel>套用表格格式</ToolLabel><Caret w={14} /></ToolRow>
            <ToolRow><Tool $w={18}><TableStyle /></Tool><ToolLabel>单元格样式</ToolLabel><Caret w={14} /></ToolRow>
          </Stack>
        </Group>

        <Group w={74} pad={6} label="单元格">
          <Stack>
            <ToolRow><Tool $w={18}><CellInsert /></Tool><ToolLabel>插入</ToolLabel><Caret w={8} ml={8} /></ToolRow>
            <ToolRow><Tool $w={18}><CellDelete /></Tool><ToolLabel>删除</ToolLabel><Caret w={8} ml={8} /></ToolRow>
            <ToolRow><Tool $w={18}><CellFormat /></Tool><ToolLabel>格式</ToolLabel><Caret w={8} ml={2} /></ToolRow>
          </Stack>
        </Group>

        <Group w={174} pad={8} label="编辑">
          <Stack $w={32}>
            <ToolRow><Tool $w={16}><Sigma /></Tool><Caret w={16} /></ToolRow>
            <ToolRow><Tool $w={16}><FillDown /></Tool><Caret w={16} /></ToolRow>
            <ToolRow><Tool $w={16}><Eraser /></Tool><Caret w={16} /></ToolRow>
          </Stack>
          <BigButton $w={65}>
            <BigIcon><SortFilter /></BigIcon>
            <BigText>排序和筛选</BigText>
            <BigText><CaretShape /></BigText>
          </BigButton>
          <BigButton $w={65} $on>
            <BigIcon><BigLens /></BigIcon>
            <BigText>查找和选择</BigText>
            <BigText><CaretShape /></BigText>
          </BigButton>
        </Group>

        <Group w={63}>
          <BigButton $w={62}>
            <BigIcon><BaiduLogo /></BigIcon>
            <BigText>保存到</BigText>
            <BigText>百度网盘</BigText>
          </BigButton>
        </Group>

        <CollapseSlot><Chevron up /></CollapseSlot>
      </Ribbon>

      <FormulaBar>
        <NameBox>
          A364
          <CaretShape />
        </NameBox>
        <Grip>···</Grip>
        <FormulaButtons>
          <CancelMark />
          <CheckMark />
          <FxText>fx</FxText>
        </FormulaButtons>
        <FormulaInput><Chevron /></FormulaInput>
      </FormulaBar>

      <Sheet>
        <GridArea>
          <HeaderRow>
            <Corner><CornerMark /></Corner>
            {columns.map((c) => (
              <ColHead key={c} $selected={c === "A"}>{c}</ColHead>
            ))}
          </HeaderRow>
          {rows.map((r, i) => (
            <Row key={i} $h={r.h}>
              <RowHead>{r.n}</RowHead>
              <Cell $numeric $selected $active={i === 0} $lift={1}>{r.a}</Cell>
              <Cell $lift={1}>{r.b}</Cell>
              <Cell $ipa $lift={1}><Lines text={r.c} /></Cell>
              <Cell><Lines text={r.d} /></Cell>
              <Cell><Lines text={r.e} /></Cell>
              {columns.slice(5).map((c) => (
                <Cell key={c} />
              ))}
            </Row>
          ))}
        </GridArea>
        <ScrollColumn>
          <ScrollTrack>
            <ScrollButton><ScrollUp /></ScrollButton>
            <ScrollThumb />
          </ScrollTrack>
        </ScrollColumn>
      </Sheet>

      <SelectionFrame />
      <FillHandle />
      <RedBox $l={22} $t={197} $w={101} $h={25} />
      <StepNote>(1)</StepNote>
      <ArrowSlot><ArrowLine /></ArrowSlot>

      <Menu>
        {menuItems.map((m) => (
          <MenuEntry key={m.key} text={m.text} accel={m.key} tail={m.tail} icon={m.icon} on={m.on} />
        ))}
        <MenuDivider />
        <MenuEntry text="选择对象" accel="O" icon={<PointerIcon />} />
        <MenuEntry text="选择窗格" accel="P" tail="..." icon={<PaneIcon />} />
      </Menu>
      <RedBox $l={927} $t={206} $w={144} $h={30} />
    </App_>
  )
}
